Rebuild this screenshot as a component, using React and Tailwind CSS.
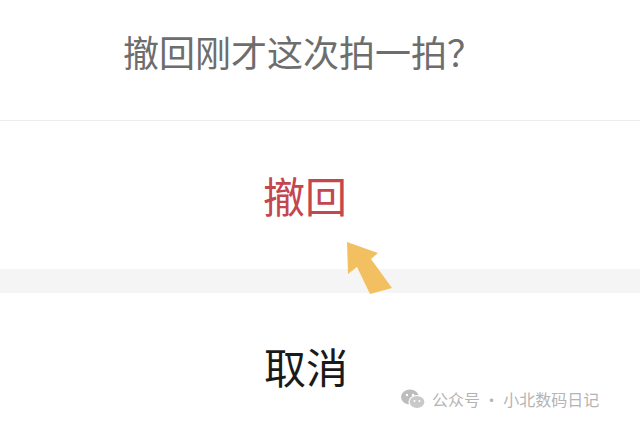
export default function App() {
  const font = { fontFamily: '"Noto Sans CJK SC", "Noto Sans", sans-serif' };
  return (
    <div className="relative w-[640px] h-[426px] bg-white overflow-hidden" style={font}>
      <div className="h-[120px] flex items-center justify-center pr-[34px] pb-[18px]">
        <span className="text-[36px] leading-none text-[#6d6d6d]">撤回刚才这次拍一拍？</span>
      </div>
      <div className="h-px bg-[#ececec]" />
      <div className="h-[148px] flex items-center justify-center pr-[30px]">
        <span className="text-[42px] leading-none text-[#c4464f]">撤回</span>
      </div>
      <div className="h-[24px] bg-[#f5f5f5]" />
      <div className="h-[133px] flex justify-center pt-[52px] pr-[28px]">
        <span className="text-[42px] leading-none text-[#1a1a1a]">取消</span>
      </div>

      <svg className="absolute left-0 top-0" width="640" height="426" viewBox="0 0 640 426">
        <polygon
          points="347,242 378,253 371,259 392,288 370,294 357,267 348,274"
          fill="#f3c061"
        />
      </svg>

      <div className="absolute left-[400px] top-[388px] flex items-center gap-[6px] text-[16px] leading-none text-[#b4b4b4]">
        <svg width="26" height="22" viewBox="0 0 26 22">
          <ellipse cx="10" cy="9" rx="9" ry="7.5" fill="#bdbdbd" />
          <ellipse cx="17" cy="14" rx="8" ry="6.5" fill="#c9c9c9" stroke="#ffffff" strokeWidth="1.2" />
          <circle cx="7" cy="7" r="1.2" fill="#fff" />
          <circle cx="13" cy="7" r="1.2" fill="#fff" />
          <circle cx="14.5" cy="13" r="1" fill="#fff" />
          <circle cx="19.5" cy="13" r="1" fill="#fff" />
        </svg>
        <span>公众号 · 小北数码日记</span>
      </div>
    </div>
  );
}
